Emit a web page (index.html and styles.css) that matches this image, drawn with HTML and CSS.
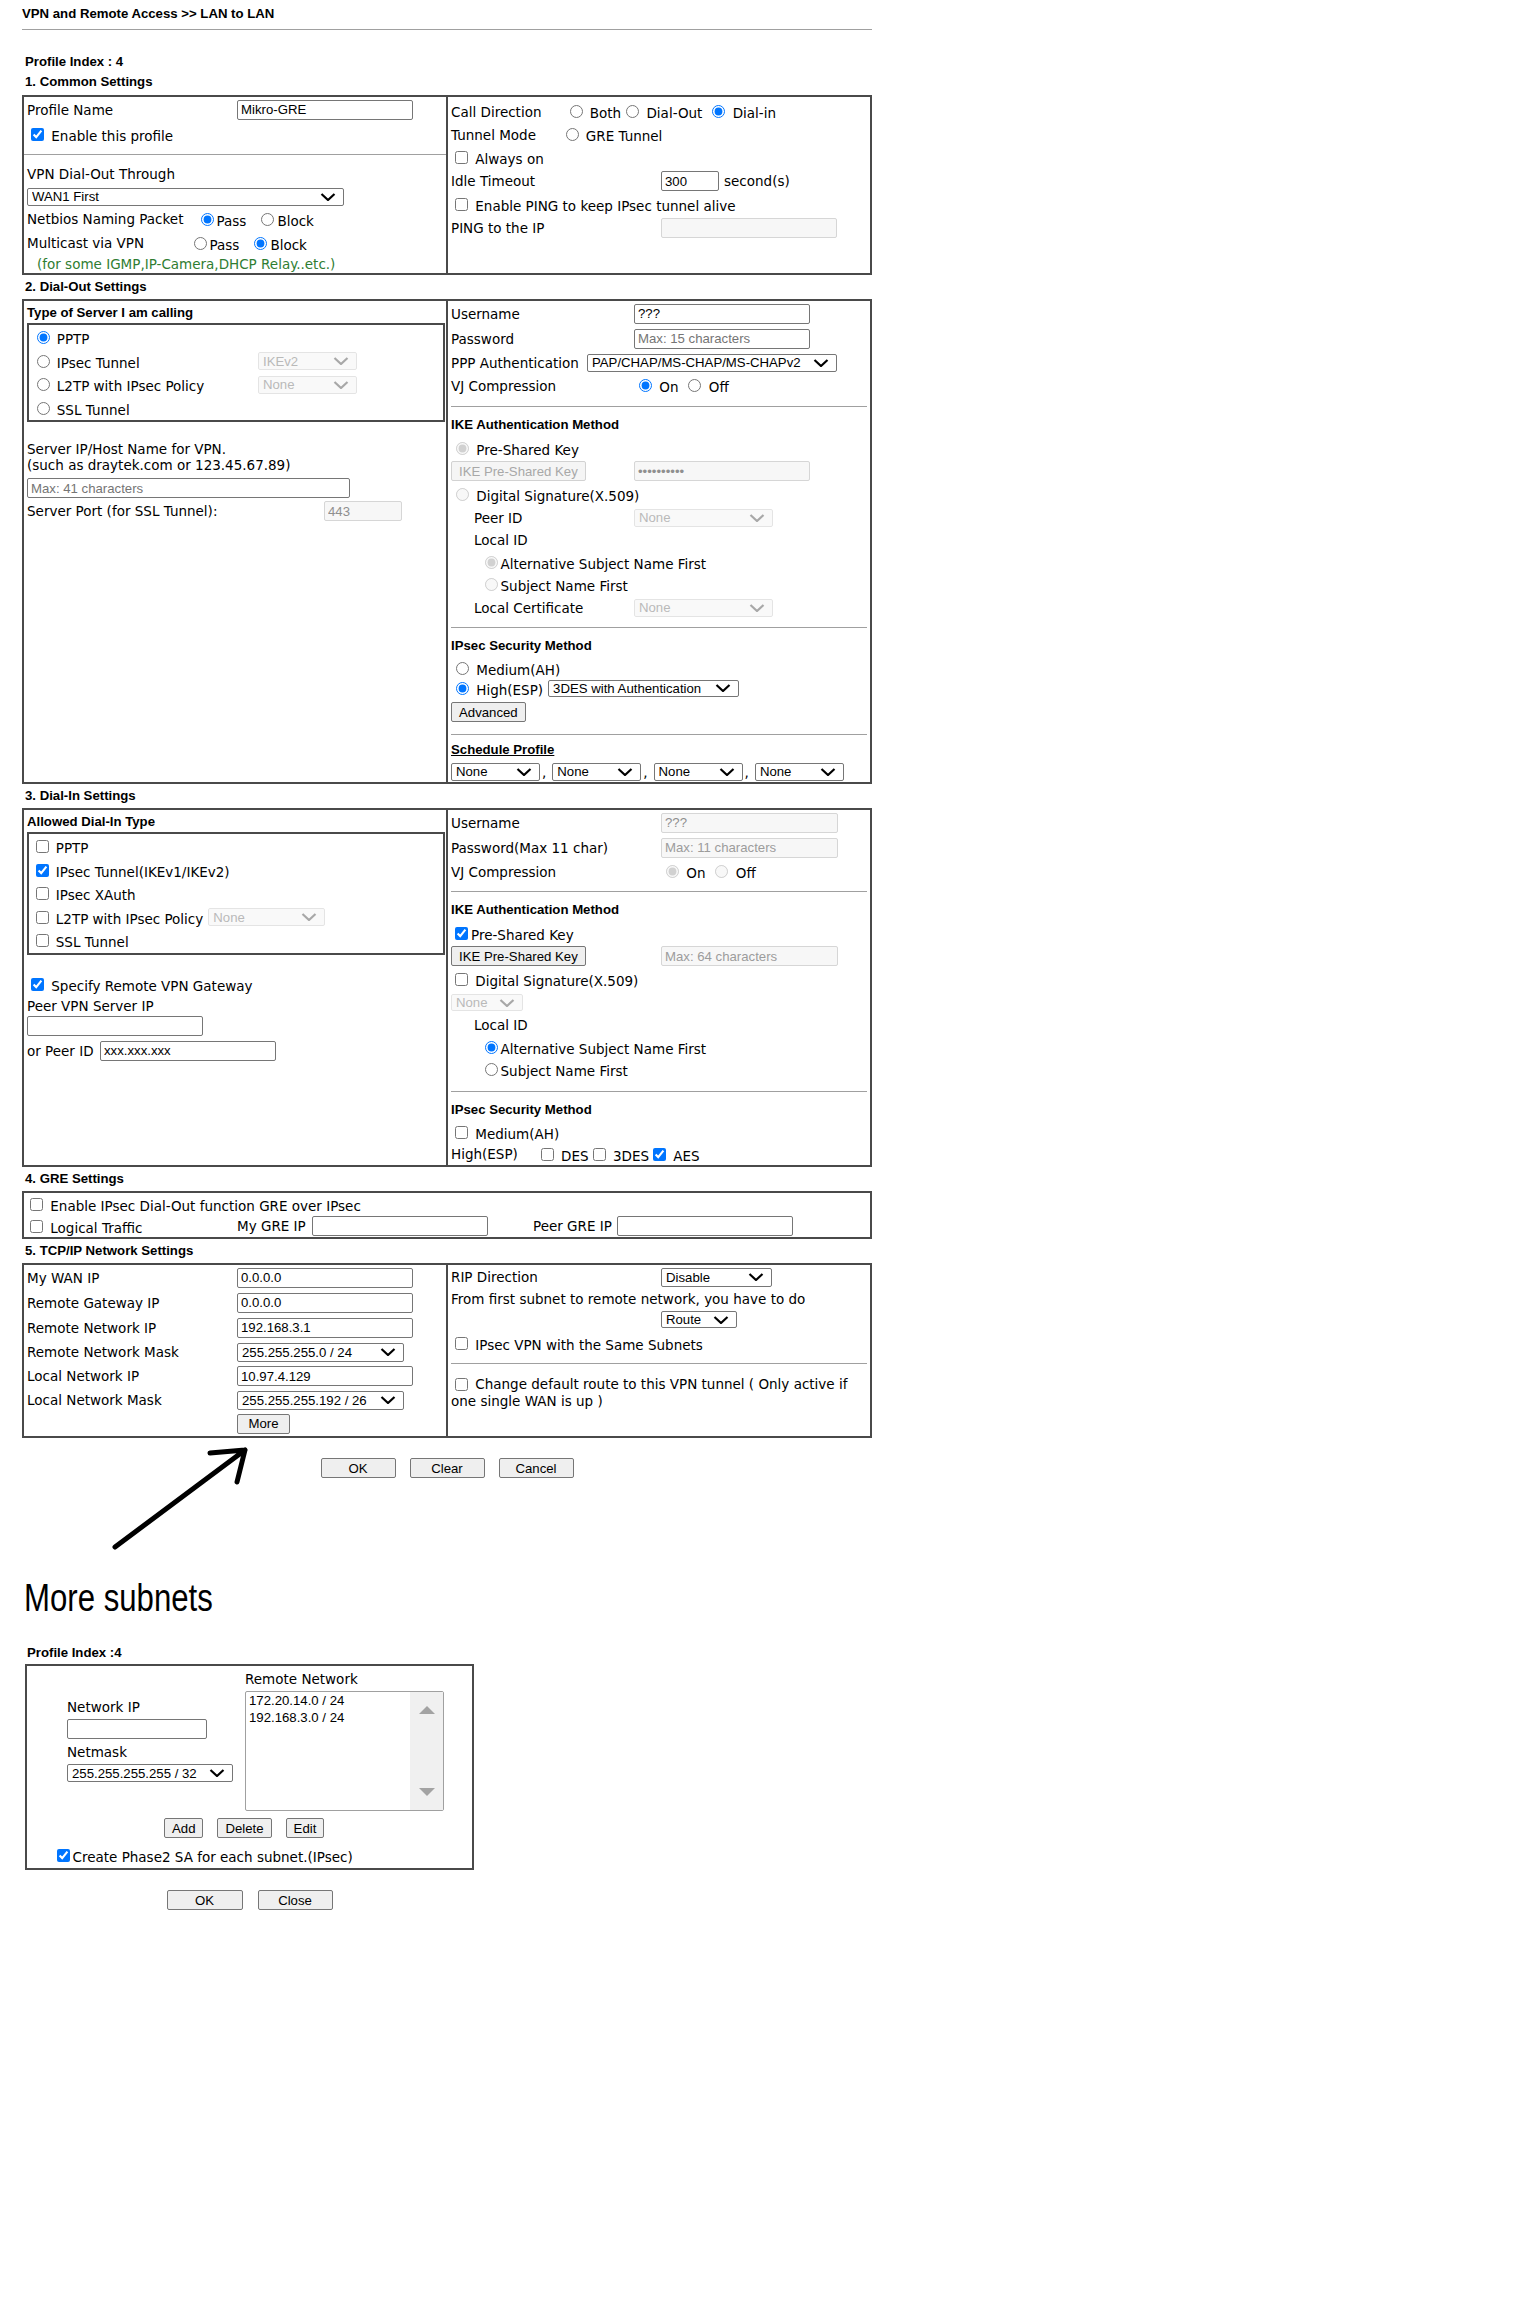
FILE: index.html
```html
<!DOCTYPE html>
<html lang="en">
<head>
    <meta charset="UTF-8">
    <meta name="viewport" content="width=device-width, initial-scale=1.0">
    <title>VPN and Remote Access &gt;&gt; LAN to LAN</title>
    <link rel="stylesheet" href="styles.css">
</head>
<body>
    <!-- shared chevron for the select boxes -->
    <svg class="defs" aria-hidden="true">
        <symbol id="chev" viewBox="0 0 16 8">
            <path d="M1.5 1 L8 7 L14.5 1"/>
        </symbol>
    </svg>

    <div class="page">
        <h1 class="page-title">VPN and Remote Access &gt;&gt; LAN to LAN</h1>
        <div class="profile-index">Profile Index : 4</div>

        <!-- 1. Common Settings -->
        <div class="sec-title first">1. Common Settings</div>
        <div class="box split">
            <div class="col pb1">
                <div class="row h25"><span class="lbl">Profile Name</span><input type="text" class="txt w176" value="Mikro-GRE"></div>
                <div class="row h24"><label><input type="checkbox" checked> Enable this profile</label></div>
                <div class="sep flush"></div>
                <div class="row h24">VPN Dial-Out Through</div>
                <div class="row h21"><span class="sel"><select class="w317"><option>WAN1 First</option></select><svg><use href="#chev"/></svg></span></div>
                <div class="row h24"><span class="lbl w168">Netbios Naming Packet</span><label><input type="radio" name="netbios" checked>Pass</label><label class="gap10"><input type="radio" name="netbios">Block</label></div>
                <div class="row h24"><span class="lbl w161">Multicast via VPN</span><label><input type="radio" name="mcast">Pass</label><label class="gap10"><input type="radio" name="mcast" checked>Block</label></div>
                <div class="row h17 note">(for some IGMP,IP-Camera,DHCP Relay..etc.)</div>
            </div>
            <div class="col pt3">
                <div class="row h23"><span class="lbl w113">Call Direction</span><label><input type="radio" name="dir"> Both</label><label><input type="radio" name="dir"> Dial-Out</label><label class="gap5"><input type="radio" name="dir" checked> Dial-in</label></div>
                <div class="row h23"><span class="lbl w109">Tunnel Mode</span><label><input type="radio" name="tmode"> GRE Tunnel</label></div>
                <div class="row h23"><label><input type="checkbox"> Always on</label></div>
                <div class="row h24"><span class="lbl">Idle Timeout</span><input type="text" class="txt w58" value="300"><span class="ml5">second(s)</span></div>
                <div class="row h23"><label><input type="checkbox"> Enable PING to keep IPsec tunnel alive</label></div>
                <div class="row h23"><span class="lbl">PING to the IP</span><input type="text" class="txt w176" disabled></div>
            </div>
        </div>

        <!-- 2. Dial-Out Settings -->
        <div class="sec-title">2. Dial-Out Settings</div>
        <div class="box split">
            <div class="col">
                <div class="row h22 sub-title">Type of Server I am calling</div>
                <div class="inner">
                    <div class="row h235"><label class="opt"><input type="radio" name="server" checked> PPTP</label></div>
                    <div class="row h235"><label class="opt"><input type="radio" name="server"> IPsec Tunnel</label><span class="sel off"><select class="w99" disabled><option>IKEv2</option></select><svg><use href="#chev"/></svg></span></div>
                    <div class="row h235"><label class="opt"><input type="radio" name="server"> L2TP with IPsec Policy</label><span class="sel off"><select class="w99" disabled><option>None</option></select><svg><use href="#chev"/></svg></span></div>
                    <div class="row h235"><label class="opt"><input type="radio" name="server"> SSL Tunnel</label></div>
                </div>
                <p class="hint">Server IP/Host Name for VPN.<br>(such as draytek.com or 123.45.67.89)</p>
                <input type="text" class="txt w323 block" placeholder="Max: 41 characters">
                <div class="row h26"><span class="lbl w297">Server Port (for SSL Tunnel):</span><input type="text" class="txt w78" value="443" disabled></div>
            </div>
            <div class="col">
                <div class="row h25"><span class="lbl w183">Username</span><input type="text" class="txt w176" value="???"></div>
                <div class="row h25"><span class="lbl w183">Password</span><input type="password" class="txt w176" placeholder="Max: 15 characters"></div>
                <div class="row h23"><span class="lbl w136">PPP Authentication</span><span class="sel"><select class="w250"><option>PAP/CHAP/MS-CHAP/MS-CHAPv2</option></select><svg><use href="#chev"/></svg></span></div>
                <div class="row h23"><span class="lbl w183">VJ Compression</span><label><input type="radio" name="vj-out" checked> On</label><label class="gap5"><input type="radio" name="vj-out"> Off</label></div>
                <div class="sep mt9"></div>
                <div class="sub-title sub-row">IKE Authentication Method</div>
                <div class="row h22"><label><input type="radio" disabled checked> Pre-Shared Key</label></div>
                <div class="row h24"><span class="lbl w183"><button type="button" class="btn" disabled>IKE Pre-Shared Key</button></span><input type="password" class="txt w176" value="xxxxxxxxxx" disabled></div>
                <div class="row h23"><label><input type="radio" disabled> Digital Signature(X.509)</label></div>
                <div class="row h23 ind"><span class="lbl w160">Peer ID</span><span class="sel off"><select class="w139" disabled><option>None</option></select><svg><use href="#chev"/></svg></span></div>
                <div class="row h22 ind">Local ID</div>
                <div class="row h22 ind2"><label><input type="radio" disabled checked>Alternative Subject Name First</label></div>
                <div class="row h23 ind2"><label><input type="radio" disabled>Subject Name First</label></div>
                <div class="row h23 ind"><span class="lbl w160">Local Certificate</span><span class="sel off"><select class="w139" disabled><option>None</option></select><svg><use href="#chev"/></svg></span></div>
                <div class="sep mt8"></div>
                <div class="sub-title sub-row">IPsec Security Method</div>
                <div class="row h20"><label><input type="radio" name="sec-out"> Medium(AH)</label></div>
                <div class="row h20"><label><input type="radio" name="sec-out" checked> High(ESP)</label><span class="sel ml5"><select class="w191 short"><option>3DES with Authentication</option></select><svg><use href="#chev"/></svg></span></div>
                <div class="row h20 mt4"><button type="button" class="btn">Advanced</button></div>
                <div class="sep mt12"></div>
                <div class="sub-title sched-title"><u>Schedule Profile</u></div>
                <div class="row h21">
                    <span class="sel"><select class="w89"><option>None</option></select><svg><use href="#chev"/></svg></span><span class="comma">,</span>
                    <span class="sel"><select class="w89"><option>None</option></select><svg><use href="#chev"/></svg></span><span class="comma">,</span>
                    <span class="sel"><select class="w89"><option>None</option></select><svg><use href="#chev"/></svg></span><span class="comma">,</span>
                    <span class="sel"><select class="w89"><option>None</option></select><svg><use href="#chev"/></svg></span>
                </div>
            </div>
        </div>

        <!-- 3. Dial-In Settings -->
        <div class="sec-title">3. Dial-In Settings</div>
        <div class="box split">
            <div class="col">
                <div class="row h22 sub-title">Allowed Dial-In Type</div>
                <div class="inner">
                    <div class="row h235"><label><input type="checkbox"> PPTP</label></div>
                    <div class="row h235"><label><input type="checkbox" checked> IPsec Tunnel(IKEv1/IKEv2)</label></div>
                    <div class="row h235"><label><input type="checkbox"> IPsec XAuth</label></div>
                    <div class="row h235"><label><input type="checkbox"> L2TP with IPsec Policy</label><span class="sel off ml5"><select class="w117" disabled><option>None</option></select><svg><use href="#chev"/></svg></span></div>
                    <div class="row h235"><label><input type="checkbox"> SSL Tunnel</label></div>
                </div>
                <div class="row h22 mt19"><label><input type="checkbox" checked> Specify Remote VPN Gateway</label></div>
                <div class="row h20">Peer VPN Server IP</div>
                <input type="text" class="txt w176 block mt2">
                <div class="row h24 mt3"><span class="lbl w73">or Peer ID</span><input type="text" class="txt w176" value="xxx.xxx.xxx"></div>
            </div>
            <div class="col">
                <div class="row h25"><span class="lbl">Username</span><input type="text" class="txt w177" value="???" disabled></div>
                <div class="row h25"><span class="lbl">Password(Max 11 char)</span><input type="password" class="txt w177" placeholder="Max: 11 characters" disabled></div>
                <div class="row h23"><span class="lbl">VJ Compression</span><label><input type="radio" name="vj-in" disabled checked> On</label><label class="gap5"><input type="radio" name="vj-in" disabled> Off</label></div>
                <div class="sep mt8"></div>
                <div class="sub-title sub-row">IKE Authentication Method</div>
                <div class="row h22"><label><input type="checkbox" checked>Pre-Shared Key</label></div>
                <div class="row h24"><span class="lbl"><button type="button" class="btn">IKE Pre-Shared Key</button></span><input type="password" class="txt w177" placeholder="Max: 64 characters" disabled></div>
                <div class="row h23"><label><input type="checkbox"> Digital Signature(X.509)</label></div>
                <div class="row h23"><span class="sel off"><select class="w72 short" disabled><option>None</option></select><svg><use href="#chev"/></svg></span></div>
                <div class="row h22 ind">Local ID</div>
                <div class="row h22 ind2"><label><input type="radio" name="lid-in" checked>Alternative Subject Name First</label></div>
                <div class="row h23 ind2"><label><input type="radio" name="lid-in">Subject Name First</label></div>
                <div class="sep mt10"></div>
                <div class="sub-title sub-row">IPsec Security Method</div>
                <div class="row h21"><label><input type="checkbox"> Medium(AH)</label></div>
                <div class="row h22"><span>High(ESP)</span><label class="gap19"><input type="checkbox"> DES</label><label><input type="checkbox"> 3DES</label><label><input type="checkbox" checked> AES</label></div>
            </div>
        </div>

        <!-- 4. GRE Settings -->
        <div class="sec-title">4. GRE Settings</div>
        <div class="box gre">
            <div class="row h22"><label><input type="checkbox"> Enable IPsec Dial-Out function GRE over IPsec</label></div>
            <div class="row h22">
                <label class="gre-first"><input type="checkbox"> Logical Traffic</label>
                <span class="gre-lbl">My GRE IP</span><input type="text" class="txt w176">
                <span class="gre-lbl peer">Peer GRE IP</span><input type="text" class="txt w176">
            </div>
        </div>

        <!-- 5. TCP/IP Network Settings -->
        <div class="sec-title">5. TCP/IP Network Settings</div>
        <div class="box split">
            <div class="col pb1">
                <div class="row h25"><span class="lbl">My WAN IP</span><input type="text" class="txt w176" value="0.0.0.0"></div>
                <div class="row h25"><span class="lbl">Remote Gateway IP</span><input type="text" class="txt w176" value="0.0.0.0"></div>
                <div class="row h25"><span class="lbl">Remote Network IP</span><input type="text" class="txt w176" value="192.168.3.1"></div>
                <div class="row h24"><span class="lbl">Remote Network Mask</span><span class="sel"><select class="w167 tall"><option>255.255.255.0 / 24</option></select><svg><use href="#chev"/></svg></span></div>
                <div class="row h24"><span class="lbl">Local Network IP</span><input type="text" class="txt w176" value="10.97.4.129"></div>
                <div class="row h24"><span class="lbl">Local Network Mask</span><span class="sel"><select class="w167 tall"><option>255.255.255.192 / 26</option></select><svg><use href="#chev"/></svg></span></div>
                <div class="row h23"><span class="lbl"></span><button type="button" class="btn w53">More</button></div>
            </div>
            <div class="col">
                <div class="row h24"><span class="lbl">RIP Direction</span><span class="sel"><select class="w111 tall"><option>Disable</option></select><svg><use href="#chev"/></svg></span></div>
                <div class="row h19">From first subnet to remote network, you have to do</div>
                <div class="row h23"><span class="lbl"></span><span class="sel"><select class="w76 short"><option>Route</option></select><svg><use href="#chev"/></svg></span></div>
                <div class="row h24"><label><input type="checkbox"> IPsec VPN with the Same Subnets</label></div>
                <div class="sep mt8"></div>
                <p class="wrap-note"><input type="checkbox"> Change default route to this VPN tunnel ( Only active if one single WAN is up )</p>
            </div>
        </div>

        <div class="btn-row">
            <button type="button" class="btn w75">OK</button>
            <button type="button" class="btn w75">Clear</button>
            <button type="button" class="btn w75">Cancel</button>
        </div>

        <!-- hand drawn pointer to the More button -->
        <svg class="annot-arrow" viewBox="0 0 240 120" width="240" height="120" aria-hidden="true">
            <path d="M93 107 L223 10 M188 13 L223 10 L215 42"/>
        </svg>

        <h2 class="more-title"><span>More subnets</span></h2>
        <div class="profile-index sub-index">Profile Index :4</div>
        <div class="box subnet-box">
            <div class="subnet-grid">
                <div class="subnet-left">
                    <div class="line first-line">Network IP</div>
                    <input type="text" class="txt w140 block mt35">
                    <div class="line mt45">Netmask</div>
                    <span class="sel mt35"><select class="w166"><option>255.255.255.255 / 32</option></select><svg><use href="#chev"/></svg></span>
                </div>
                <div class="subnet-right">
                    <div class="line remote-line">Remote Network</div>
                    <div class="listbox">
                        <div class="list-items">
                            <div>172.20.14.0 / 24</div>
                            <div>192.168.3.0 / 24</div>
                        </div>
                        <div class="scrollbar">
                            <svg width="16" height="8" viewBox="0 0 16 8"><path d="M0 8 L8 0 L16 8 Z"/></svg>
                            <svg width="16" height="8" viewBox="0 0 16 8"><path d="M0 0 L16 0 L8 8 Z"/></svg>
                        </div>
                    </div>
                </div>
            </div>
            <div class="subnet-btns">
                <button type="button" class="btn">Add</button>
                <button type="button" class="btn">Delete</button>
                <button type="button" class="btn">Edit</button>
            </div>
            <div class="row h22 phase2"><label><input type="checkbox" checked>Create Phase2 SA for each subnet.(IPsec)</label></div>
        </div>
        <div class="btn-row small">
            <button type="button" class="btn w76">OK</button>
            <button type="button" class="btn w75">Close</button>
        </div>
    </div>
</body>
</html>
```

FILE: styles.css
```css
body {
    margin: 0;
    background: #fff;
    color: #000;
    font-family: "DejaVu Sans", Verdana, sans-serif;
    font-size: 13.5px;
}

.defs {
    display: none;
}

.page {
    position: relative;
    width: 850px;
    margin-left: 22px;
    padding-bottom: 380px;
}

.page-title {
    margin: 0;
    padding: 6px 0 7px;
    font: bold 13.2px/16px "Liberation Sans", Arial, sans-serif;
    border-bottom: 1px solid #a0a0a0;
}

.profile-index,
.sec-title,
.sub-title {
    font-family: "Liberation Sans", Arial, sans-serif;
    font-weight: bold;
    font-size: 13.2px;
}

.profile-index {
    margin-top: 22px;
    line-height: 20px;
    padding-left: 3px;
}

.sec-title {
    line-height: 24px;
    padding-left: 3px;
}

.sec-title.first {
    line-height: 20px;
    padding-bottom: 3px;
}

/* boxes and columns */
.box {
    border: 2px solid #4a4a4a;
}

.split {
    display: grid;
    grid-template-columns: 422px 424px;
}

.col {
    padding: 0 3px;
    min-width: 0;
}

.col + .col {
    border-left: 2px solid #4a4a4a;
}

.pt3 { padding-top: 3px; }
.pb1 { padding-bottom: 1px; }

.inner {
    border: 2px solid #4a4a4a;
    margin-right: -2px;
    padding: 1px 0 0 2.5px;
}

.row {
    display: flex;
    align-items: center;
    white-space: nowrap;
}

.h17 { height: 17px; }
.h19 { height: 19px; }
.h20 { height: 20px; }
.h21 { height: 21px; }
.h22 { height: 22px; }
.h23 { height: 23px; }
.h235 { height: 23.5px; }
.h24 { height: 24px; }
.h25 { height: 25px; }
.h26 { height: 26px; }

.mt2 { margin-top: 2px; }
.mt3 { margin-top: 3px; }
.mt4 { margin-top: 4px; }
.mt8 { margin-top: 8px; }
.mt9 { margin-top: 9px; }
.mt10 { margin-top: 10px; }
.mt12 { margin-top: 12px; }
.mt19 { margin-top: 19px; }
.ml5 { margin-left: 5px; }

.lbl {
    flex: none;
    width: 210px;
}

.lbl.w73 { width: 73px; }
.lbl.w109 { width: 109.5px; }
.lbl.w113 { width: 113.5px; }
.lbl.w136 { width: 136px; }
.lbl.w160 { width: 160px; }
.lbl.w161 { width: 161.5px; }
.lbl.w168 { width: 168.5px; }
.lbl.w183 { width: 183px; }
.lbl.w297 { width: 297px; }

.opt {
    flex: none;
    width: 226.5px;
}

.gap5 { margin-left: 5px; }
.gap10 { margin-left: 10px; }
.gap19 { margin-left: 19px; }

.ind { padding-left: 23px; }
.ind2 { padding-left: 28.5px; }

.sep {
    border-top: 1px solid #a0a0a0;
}

.sep.flush {
    margin: 8px -3px 7px;
}

.sub-row {
    margin-top: 6px;
    line-height: 24px;
}

.sched-title {
    margin-top: 4px;
    line-height: 22px;
}

.note {
    padding-left: 10px;
    color: #2f7d32;
}

.hint {
    margin: 19px 0 0;
    line-height: 16px;
}

.block {
    display: block;
}

.block.w323 {
    margin-top: 5px;
}

/* form controls */
.txt {
    box-sizing: border-box;
    height: 20px;
    margin: 0;
    padding: 1px 3px;
    border: 1px solid #767676;
    border-radius: 2px;
    background: #fff;
    color: #000;
    font: 13.2px "Liberation Sans", Arial, sans-serif;
}

.txt::placeholder {
    color: #757575;
}

.txt:disabled {
    background: #f7f7f7;
    border-color: #d6d6d6;
    color: #8f8f8f;
}

.txt:disabled::placeholder {
    color: #9c9c9c;
}

.w58 { width: 58px; }
.w140 { width: 140px; }
.w176 { width: 176px; }
.w177 { width: 177px; }
.w78 { width: 78px; }
.w323 { width: 323px; }

.sel {
    position: relative;
    display: inline-flex;
    flex: none;
}

.sel select {
    appearance: none;
    -webkit-appearance: none;
    box-sizing: border-box;
    height: 18px;
    margin: 0;
    padding: 0 24px 0 4px;
    border: 1px solid #767676;
    border-radius: 2px;
    background: #fff;
    color: #000;
    font: 13.2px "Liberation Sans", Arial, sans-serif;
}

.sel select.short { height: 17px; }
.sel select.tall { height: 19px; }

.sel select:disabled {
    background: #f7f7f7;
    border-color: #dadada;
    color: #9c9c9c;
}

.sel svg {
    position: absolute;
    right: 8px;
    top: 50%;
    width: 16px;
    height: 8px;
    margin-top: -4px;
    pointer-events: none;
}

.sel svg path,
.sel use {
    fill: none;
    stroke: #000;
    stroke-width: 2.2;
}

.sel.off use {
    stroke: #a8a8a8;
}

.w72 { width: 72px; }
.w76 { width: 76px; }
.w89 { width: 89px; }
.w99 { width: 99px; }
.w111 { width: 111px; }
.w117 { width: 117px; }
.w139 { width: 139px; }
.w166 { width: 166px; }
.w167 { width: 167px; }
.w191 { width: 191px; }
.w250 { width: 250px; }
.w317 { width: 317px; }

.comma {
    margin: 0 6px 0 2px;
}

.btn {
    box-sizing: border-box;
    height: 20px;
    margin: 0;
    padding: 0 7px;
    border: 1px solid #767676;
    border-radius: 2px;
    background: #efefef;
    color: #000;
    font: 13.2px "Liberation Sans", Arial, sans-serif;
}

.btn:disabled {
    background: #f5f5f5;
    border-color: #d2d2d2;
    color: #a8a8a8;
}

.btn.w53 { width: 53px; }
.btn.w75 { width: 75px; }
.btn.w76 { width: 76px; }

/* GRE row */
.gre {
    padding-left: 2px;
}

.gre-first {
    flex: none;
    width: 211px;
}

.gre-lbl {
    flex: none;
    width: 75px;
}

.gre-lbl.peer {
    width: 84px;
    margin-left: 45px;
}

.wrap-note {
    margin: 12px 0 0;
    line-height: 17px;
}

.wrap-note input {
    margin: 0 3px 0 4px;
    vertical-align: -2px;
}

.btn-row {
    display: flex;
    justify-content: center;
    gap: 14px;
    margin-top: 20px;
}

.annot-arrow {
    position: absolute;
    left: 0;
    top: 1440px;
}

.annot-arrow path {
    fill: none;
    stroke: #000;
    stroke-width: 5;
    stroke-linecap: round;
    stroke-linejoin: round;
}

/* more subnets dialog */
.more-title {
    margin: 98px 0 0;
    padding-left: 2px;
    font: normal 38px/44px "Liberation Sans Narrow", "Liberation Sans", Arial, sans-serif;
}

.more-title span {
    display: inline-block;
    transform: scaleX(0.82);
    transform-origin: 0 0;
}

.sub-index {
    margin-top: 23px;
    padding-left: 5px;
}

.subnet-box {
    width: 449px;
    box-sizing: border-box;
    margin-left: 3px;
    margin-top: 1px;
    padding-bottom: 2px;
}

.subnet-grid {
    display: grid;
    grid-template-columns: 218px 1fr;
}

.subnet-left {
    padding-left: 40px;
}

.line {
    line-height: 17px;
}

.first-line { margin-top: 32.5px; }
.remote-line { margin-top: 4.5px; }
.mt35 { margin-top: 3.5px; }
.mt45 { margin-top: 4.5px; }

.listbox {
    display: flex;
    box-sizing: border-box;
    width: 199px;
    height: 120px;
    margin-top: 3.5px;
    border: 1px solid #a0a0a0;
    border-radius: 2px;
    font: 13.2px/17px "Liberation Sans", Arial, sans-serif;
}

.list-items {
    flex: 1;
    padding: 0 3px;
}

.scrollbar {
    width: 33px;
    background: #f0f0f0;
    display: flex;
    flex-direction: column;
    justify-content: space-between;
    align-items: center;
    padding: 14px 0;
}

.scrollbar path {
    fill: #a3a3a3;
}

.subnet-btns {
    display: flex;
    gap: 14px;
    margin-top: 7px;
    padding-left: 137px;
}

.phase2 {
    margin-top: 6px;
    padding-left: 25.5px;
}

.phase2 input {
    margin-left: 4px;
}

.btn-row.small {
    width: 449px;
    margin-left: 3px;
    gap: 15px;
}
```
